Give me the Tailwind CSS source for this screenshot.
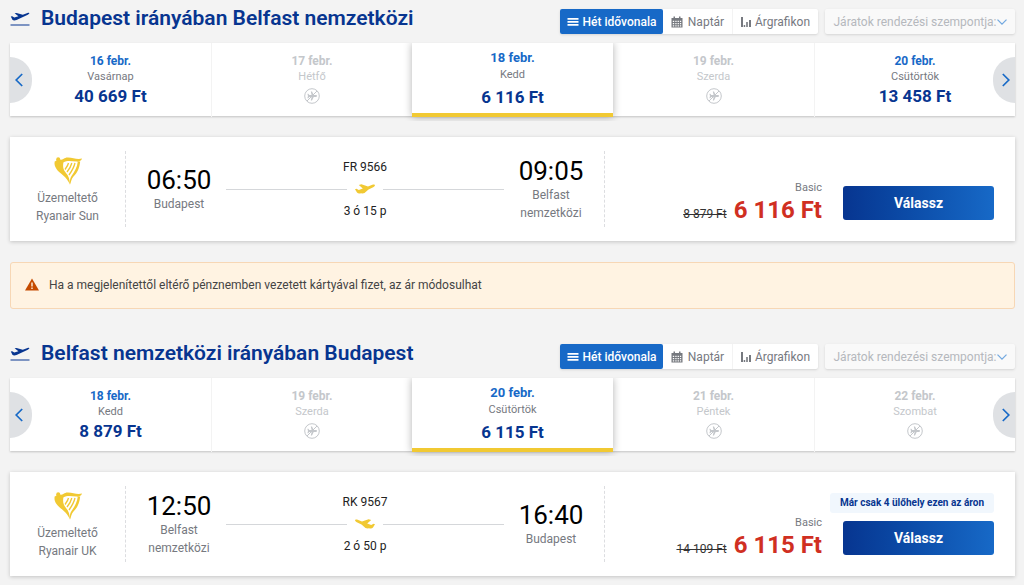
<!DOCTYPE html>
<html lang="hu">
<head>
  <meta charset="UTF-8" />
  <meta name="viewport" content="width=device-width, initial-scale=1" />
  <title>Járatok kiválasztása</title>
  <script src="https://cdn.jsdelivr.net/npm/@tailwindcss/browser@4"></script>
</head>
<body class="bg-[#f3f3f3] font-[Roboto,sans-serif] text-[12px] leading-[18px] text-[#76797f] pl-[10px] pr-[9px] pb-[9px]">

  <!-- Ikonok -->
  <svg class="hidden" aria-hidden="true">
    <symbol id="plane" viewBox="0 0 20 10">
      <path fill="currentColor" d="M0 5.2 1.5 4.8 3.8 6 7.8 4.4 3.8.9 6.4.2 13 2.4 17.3.7C19 .1 20.3.6 19.9 1.6 19.7 2.3 19 2.8 18.2 3.2L13.500 5.400 9.500 9 7.500 9.400 6 9.200C4.500 9.800 2.800 9.600 2 8.600Z"/>
    </symbol>
    <symbol id="takeoff" viewBox="0 0 20 16">
      <path fill="currentColor" d="M.8 5.600 2.200 5.300 4.300 6.500 8.400 5.300 4.600 2.300 6.500 2 12.800 3.700 17.500 1.900C18.700 1.500 19.600 1.700 19.400 2.300 19.200 2.900 18.500 3.300 17.800 3.700L6.500 9C5 9.700 3.200 9.700 2.400 8.700Z"/>
      <path fill="currentColor" d="M.5 13.500h19v1H.5z"/>
    </symbol>
    <symbol id="harp" viewBox="0 0 28 28">
      <circle cx="4.200" cy="2.200" r="2" fill="currentColor"/>
      <path fill="currentColor" d="M5.500 2.800C9 3.200 10 .2 14 .4c5 .2 8.500 2.300 14 1.200-.8 2.600-3 3.300-5.500 3C17 4 13 3.300 9.500 5.300L5 6.500 1 4.500 3 3Z"/>
      <path fill="currentColor" d="M.8 4.300C0 7 .8 9.500 2.500 12c3 4.500 10.500 7.500 13.500 15.800C16 22.500 14.500 19 12 16 9.500 13 8.500 10 9.500 5Z"/>
      <path fill="none" stroke="currentColor" stroke-width="1.300" d="M14.500 6C14 8.500 12.500 10.500 11 12.500M17.800 6C17 9.500 15 12.500 13 15M21 6C20 10.500 17.500 14.500 15 18"/>
      <path fill="currentColor" d="M23.800 4.500h2.400C25.500 11 23.500 15.500 19.500 19.500 17.500 21.500 17 24.500 16.300 27.500 15.600 24.500 15.800 21.500 17.500 19 20.500 14.500 23.200 10.500 23.800 4.500Z"/>
    </symbol>
    <symbol id="noflight" viewBox="0 0 16 16">
      <circle cx="8" cy="8" r="7.300" fill="none" stroke="currentColor"/>
      <path fill="none" stroke="currentColor" d="M3 13 13 3"/>
      <path fill="currentColor" d="M13 8c0 .6-.5.9-1.100.9H9.700L8 12.500H6.800l.8-3.600H5.300l-1 1.300h-.9L4 8l-.6-2.200h.9l1 1.300h2.300L6.800 3.500H8l1.700 3.600h2.200c.6 0 1.100.3 1.100.9Z"/>
    </symbol>
    <symbol id="list" viewBox="0 0 12 12">
      <path fill="currentColor" d="M.5 2h11v1.800H.5zm0 3h11v1.800H.5zm0 3h11v1.800H.5z"/>
    </symbol>
    <symbol id="calendar" viewBox="0 0 12 12">
      <path fill="currentColor" fill-rule="evenodd" d="M2.500.5h1.500v1.500h4V.5h1.500v1.500H11.500v9.500H.5V2h2ZM1.800 4.800v1.200H3.200V4.800Zm2.500 0v1.200h1.300V4.800Zm2.300 0v1.200h1.300V4.800Zm2.300 0v1.200h1.300V4.800ZM1.800 7v1.200H3.200V7Zm2.500 0v1.200h1.300V7Zm2.300 0v1.200h1.300V7Zm2.300 0v1.200h1.300V7ZM1.800 9.200v1.200H3.200V9.200Zm2.500 0v1.200h1.300V9.200Zm2.300 0v1.200h1.300V9.200Zm2.300 0v1.200h1.300V9.200Z"/>
    </symbol>
    <symbol id="bars" viewBox="0 0 10 12">
      <path fill="currentColor" d="M0 1h2v10H0zm2.700 8h1.500v2H2.700zm2.500-3h1.600v5H5.200zM8 4h2v7H8z"/>
    </symbol>
    <symbol id="chevron" viewBox="0 0 8 14">
      <path fill="none" stroke="currentColor" stroke-width="1.700" d="M7.200 1 1.200 7l6 6"/>
    </symbol>
  </svg>

  <!-- Odaút -->
  <section>
    <header class="flex h-[43px] items-start pt-[9px]">
      <svg class="mt-[2px] mr-[11px] h-4 w-5 text-[#073590]"><use href="#takeoff"/></svg>
      <h2 class="-mt-1 mr-auto text-[21px] leading-[26px] font-semibold text-[#073590]">Budapest irányában Belfast nemzetközi</h2>
      <div class="mr-[7px] flex h-[25px] rounded-[2px] bg-white shadow-sm">
        <button type="button" class="flex w-[103px] items-center justify-center gap-1 rounded-[2px] bg-[#1769c7] font-medium text-white"><svg class="h-3 w-3"><use href="#list"/></svg>Hét idővonala</button>
        <button type="button" class="flex w-[69px] items-center justify-center gap-[5px]"><svg class="h-3 w-3"><use href="#calendar"/></svg>Naptár</button>
        <button type="button" class="flex w-[86px] items-center justify-center gap-1 border-l border-[#f3f3f3]"><svg class="h-3 w-[10px]"><use href="#bars"/></svg>Árgrafikon</button>
      </div>
      <button type="button" class="flex h-[25px] w-[190px] items-center justify-center gap-[2px] rounded-[2px] bg-[#f9f9f9] whitespace-nowrap text-[#b5b8bd] shadow-sm">Járatok rendezési szempontja:<svg class="h-[14px] w-2 -rotate-90 scale-75 text-[#73a9e0]"><use href="#chevron"/></svg></button>
    </header>

    <div class="relative grid h-[73px] grid-cols-5 bg-white text-center shadow-[0_1px_2px_rgba(0,0,0,0.2)]">
      <button type="button" class="flex flex-col items-center pt-[9px]">
        <span class="leading-[18px] font-bold text-[#1769c7]">16 febr.</span>
        <span class="text-[11px] leading-[14px]">Vasárnap</span>
        <span class="text-[17px] leading-6 font-bold text-[#073590]">40 669 Ft</span>
      </button>
      <button type="button" disabled class="flex flex-col items-center border-l border-[#f3f3f3] pt-[9px] text-[#c4c7cb]">
        <span class="leading-[18px] font-bold">17 febr.</span>
        <span class="text-[11px] leading-[14px]">Hétfő</span>
        <svg class="mt-1 h-4 w-4"><use href="#noflight"/></svg>
      </button>
      <button type="button" class="relative flex h-[74px] flex-col items-center border-b-4 border-[#f1c933] bg-white pt-[6px] shadow-[0_0_8px_rgba(0,0,0,0.3)] [clip-path:inset(0_-12px_-4px_-12px)]">
        <span class="text-[13px] leading-[18px] font-bold text-[#1769c7]">18 febr.</span>
        <span class="text-[11px] leading-4">Kedd</span>
        <span class="mt-[2px] text-[17px] leading-6 font-bold text-[#073590]">6 116 Ft</span>
      </button>
      <button type="button" disabled class="flex flex-col items-center pt-[9px] text-[#c4c7cb]">
        <span class="leading-[18px] font-bold">19 febr.</span>
        <span class="text-[11px] leading-[14px]">Szerda</span>
        <svg class="mt-1 h-4 w-4"><use href="#noflight"/></svg>
      </button>
      <button type="button" class="flex flex-col items-center border-l border-[#f3f3f3] pt-[9px]">
        <span class="leading-[18px] font-bold text-[#1769c7]">20 febr.</span>
        <span class="text-[11px] leading-[14px]">Csütörtök</span>
        <span class="text-[17px] leading-6 font-bold text-[#073590]">13 458 Ft</span>
      </button>
      <button type="button" aria-label="Előző" class="absolute top-[14px] left-0 flex h-[46px] w-[22px] items-center rounded-r-full bg-[#dfe1e4] pl-[5px] text-[#1769c7]"><svg class="h-[14px] w-2"><use href="#chevron"/></svg></button>
      <button type="button" aria-label="Következő" class="absolute top-[14px] right-0 flex h-[46px] w-[22px] items-center justify-end rounded-l-full bg-[#dfe1e4] pr-[5px] text-[#1769c7]"><svg class="h-[14px] w-2 -scale-x-100"><use href="#chevron"/></svg></button>
    </div>

    <article class="mt-[21px] flex h-[104px] bg-white py-[14px] pr-[21px] shadow-[0_1px_4px_rgba(0,0,0,0.2)]">
      <div class="flex w-[116px] flex-col items-center justify-center border-r border-dashed border-[#dcdde0] pt-1 text-center">
        <svg class="mb-1 h-7 w-7 text-[#f1c933]"><use href="#harp"/></svg>
        <span>Üzemeltető</span>
        <span>Ryanair Sun</span>
      </div>
      <div class="flex flex-1 items-center border-r border-dashed border-[#dcdde0] px-4">
        <div class="w-[74px] text-center">
          <div class="text-[26px] leading-[30px] text-black">06:50</div>
          <div>Budapest</div>
        </div>
        <div class="mx-[10px] flex-1 text-center text-[#222]">
          <div>FR 9566</div>
          <div class="my-2 flex items-center gap-2">
            <span class="h-px flex-1 bg-[#d5d7da]"></span>
            <svg class="h-[10px] w-5 text-[#f1c933]"><use href="#plane"/></svg>
            <span class="h-px flex-1 bg-[#d5d7da]"></span>
          </div>
          <div>3 ó 15 p</div>
        </div>
        <div class="w-[74px] text-center">
          <div class="text-[26px] leading-[30px] text-black">09:05</div>
          <div>Belfast nemzetközi</div>
        </div>
      </div>
      <div class="flex w-[389px] items-end justify-end pb-[3px]">
        <div class="text-right">
          <div class="mb-px text-[11px] leading-[14px]">Basic</div>
          <div class="flex items-baseline gap-[7px]">
            <del class="text-[#333]">8 879 Ft</del>
            <strong class="text-[24px] leading-7 font-bold text-[#d02f22]">6 116 Ft</strong>
          </div>
        </div>
        <div class="flex w-[172px] flex-col items-end pb-1">
          <button type="button" class="h-[34px] w-[151px] rounded-[3px] bg-linear-to-r from-[#073590] to-[#1769c7] text-[14px] font-bold text-white">Válassz</button>
        </div>
      </div>
    </article>
  </section>

  <div role="alert" class="mt-[21px] mb-[26px] flex h-[47px] items-center rounded-[3px] border border-[#f7d7b5] bg-[#fff3e2] px-[14px] pb-[2px] text-[#444]">
    <svg class="mr-[10px] h-[13px] w-[14px]" viewBox="0 0 14 13"><path fill="#c54b00" d="M7 .5 14 12.500H0Z"/><path fill="#fff3e2" d="M6.300 4.500h1.400v4H6.300zm0 5h1.400v1.400H6.300z"/></svg>
    Ha a megjelenítettől eltérő pénznemben vezetett kártyával fizet, az ár módosulhat
  </div>

  <!-- Visszaút -->
  <section>
    <header class="flex h-[43px] items-start pt-[9px]">
      <svg class="mt-[2px] mr-[11px] h-4 w-5 text-[#073590]"><use href="#takeoff"/></svg>
      <h2 class="-mt-1 mr-auto text-[21px] leading-[26px] font-semibold text-[#073590]">Belfast nemzetközi irányában Budapest</h2>
      <div class="mr-[7px] flex h-[25px] rounded-[2px] bg-white shadow-sm">
        <button type="button" class="flex w-[103px] items-center justify-center gap-1 rounded-[2px] bg-[#1769c7] font-medium text-white"><svg class="h-3 w-3"><use href="#list"/></svg>Hét idővonala</button>
        <button type="button" class="flex w-[69px] items-center justify-center gap-[5px]"><svg class="h-3 w-3"><use href="#calendar"/></svg>Naptár</button>
        <button type="button" class="flex w-[86px] items-center justify-center gap-1 border-l border-[#f3f3f3]"><svg class="h-3 w-[10px]"><use href="#bars"/></svg>Árgrafikon</button>
      </div>
      <button type="button" class="flex h-[25px] w-[190px] items-center justify-center gap-[2px] rounded-[2px] bg-[#f9f9f9] whitespace-nowrap text-[#b5b8bd] shadow-sm">Járatok rendezési szempontja:<svg class="h-[14px] w-2 -rotate-90 scale-75 text-[#73a9e0]"><use href="#chevron"/></svg></button>
    </header>

    <div class="relative grid h-[73px] grid-cols-5 bg-white text-center shadow-[0_1px_2px_rgba(0,0,0,0.2)]">
      <button type="button" class="flex flex-col items-center pt-[9px]">
        <span class="leading-[18px] font-bold text-[#1769c7]">18 febr.</span>
        <span class="text-[11px] leading-[14px]">Kedd</span>
        <span class="text-[17px] leading-6 font-bold text-[#073590]">8 879 Ft</span>
      </button>
      <button type="button" disabled class="flex flex-col items-center border-l border-[#f3f3f3] pt-[9px] text-[#c4c7cb]">
        <span class="leading-[18px] font-bold">19 febr.</span>
        <span class="text-[11px] leading-[14px]">Szerda</span>
        <svg class="mt-1 h-4 w-4"><use href="#noflight"/></svg>
      </button>
      <button type="button" class="relative flex h-[74px] flex-col items-center border-b-4 border-[#f1c933] bg-white pt-[6px] shadow-[0_0_8px_rgba(0,0,0,0.3)] [clip-path:inset(0_-12px_-4px_-12px)]">
        <span class="text-[13px] leading-[18px] font-bold text-[#1769c7]">20 febr.</span>
        <span class="text-[11px] leading-4">Csütörtök</span>
        <span class="mt-[2px] text-[17px] leading-6 font-bold text-[#073590]">6 115 Ft</span>
      </button>
      <button type="button" disabled class="flex flex-col items-center pt-[9px] text-[#c4c7cb]">
        <span class="leading-[18px] font-bold">21 febr.</span>
        <span class="text-[11px] leading-[14px]">Péntek</span>
        <svg class="mt-1 h-4 w-4"><use href="#noflight"/></svg>
      </button>
      <button type="button" disabled class="flex flex-col items-center border-l border-[#f3f3f3] pt-[9px] text-[#c4c7cb]">
        <span class="leading-[18px] font-bold">22 febr.</span>
        <span class="text-[11px] leading-[14px]">Szombat</span>
        <svg class="mt-1 h-4 w-4"><use href="#noflight"/></svg>
      </button>
      <button type="button" aria-label="Előző" class="absolute top-[14px] left-0 flex h-[46px] w-[22px] items-center rounded-r-full bg-[#dfe1e4] pl-[5px] text-[#1769c7]"><svg class="h-[14px] w-2"><use href="#chevron"/></svg></button>
      <button type="button" aria-label="Következő" class="absolute top-[14px] right-0 flex h-[46px] w-[22px] items-center justify-end rounded-l-full bg-[#dfe1e4] pr-[5px] text-[#1769c7]"><svg class="h-[14px] w-2 -scale-x-100"><use href="#chevron"/></svg></button>
    </div>

    <article class="mt-[21px] flex h-[104px] bg-white py-[14px] pr-[21px] shadow-[0_1px_4px_rgba(0,0,0,0.2)]">
      <div class="flex w-[116px] flex-col items-center justify-center border-r border-dashed border-[#dcdde0] pt-1 text-center">
        <svg class="mb-1 h-7 w-7 text-[#f1c933]"><use href="#harp"/></svg>
        <span>Üzemeltető</span>
        <span>Ryanair UK</span>
      </div>
      <div class="flex flex-1 items-center border-r border-dashed border-[#dcdde0] px-4">
        <div class="w-[74px] text-center">
          <div class="text-[26px] leading-[30px] text-black">12:50</div>
          <div>Belfast nemzetközi</div>
        </div>
        <div class="mx-[10px] flex-1 text-center text-[#222]">
          <div>RK 9567</div>
          <div class="my-2 flex items-center gap-2">
            <span class="h-px flex-1 bg-[#d5d7da]"></span>
            <svg class="h-[10px] w-5 -scale-x-100 text-[#f1c933]"><use href="#plane"/></svg>
            <span class="h-px flex-1 bg-[#d5d7da]"></span>
          </div>
          <div>2 ó 50 p</div>
        </div>
        <div class="w-[74px] text-center">
          <div class="text-[26px] leading-[30px] text-black">16:40</div>
          <div>Budapest</div>
        </div>
      </div>
      <div class="flex w-[389px] items-end justify-end pb-[3px]">
        <div class="text-right">
          <div class="mb-px text-[11px] leading-[14px]">Basic</div>
          <div class="flex items-baseline gap-[7px]">
            <del class="text-[#333]">14 109 Ft</del>
            <strong class="text-[24px] leading-7 font-bold text-[#d02f22]">6 115 Ft</strong>
          </div>
        </div>
        <div class="flex w-[172px] flex-col items-end gap-2 pb-1">
          <span class="rounded-[3px] bg-[#f1f7fd] px-[10px] text-[10px] leading-5 font-bold whitespace-nowrap text-[#073590]">Már csak 4 ülőhely ezen az áron</span>
          <button type="button" class="h-[34px] w-[151px] rounded-[3px] bg-linear-to-r from-[#073590] to-[#1769c7] text-[14px] font-bold text-white">Válassz</button>
        </div>
      </div>
    </article>
  </section>

</body>
</html>
